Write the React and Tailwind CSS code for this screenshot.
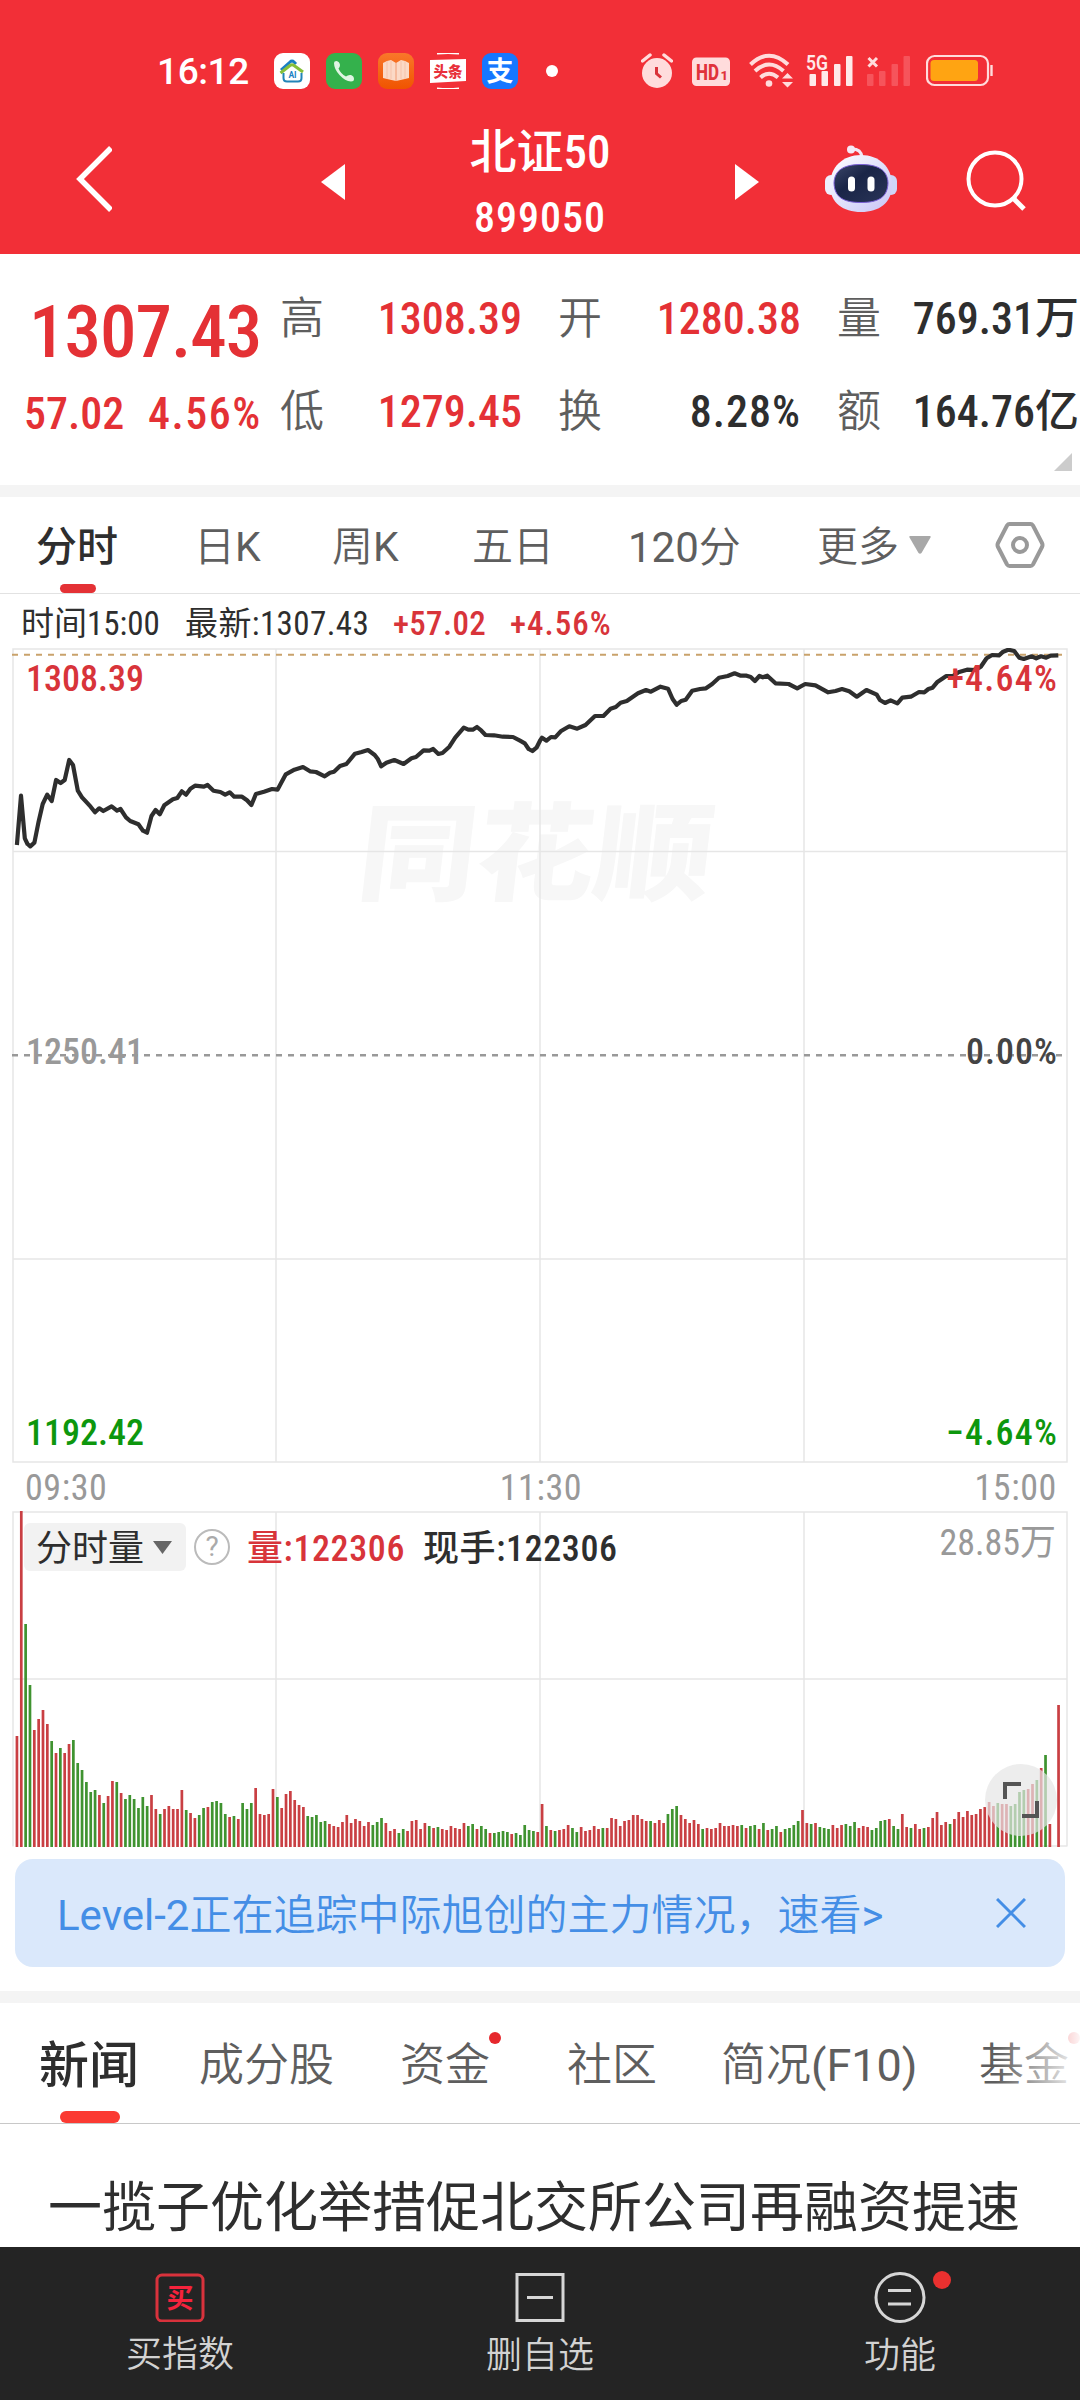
import React from "react";

const price =
  "16.9,197 21,147.7 24.8,190.3 27.5,196 30.3,198.3 34.4,194.7 38.6,173.7 42.7,156 47.2,146.7 51.7,153 56.1,132 60.6,135 64.7,132 69.2,112 73,117 77.8,142.7 82,149.3 86,153.7 90.6,158.7 95,164.3 99.2,160.3 103.3,163 111.6,158.3 117,162.7 120.5,161 126,169.3 130.2,173 138.4,176.3 143,182.7 147,184.7 151.5,168 155.6,162 159.8,166.3 164.3,157.3 172.9,151.3 177.3,150 181.8,143.3 186,146.7 190.4,140.7 195,137.7 203.9,138.7 207.6,137 213.5,142.7 220.4,144 225.2,146.7 229.7,144.3 234.2,148.7 242,148.7 247,152.3 251.4,157 255.9,146 264,143.7 272,141 277.5,141.7 285.8,126.3 294.4,121.7 303,119 310,123.3 316,124 324.7,128.3 330,124.7 334,123.7 340,118 346.4,116 355,105.7 361.6,104 368,102 374.7,107 377.8,111 381.2,118.3 386.4,114.7 394.3,112 403.6,116 411.5,110.3 416,109 423.6,102.3 429.4,102.7 433.2,101 438.4,106 442.5,105 449.4,98.7 455.2,89.7 463.8,79.7 468.3,81.7 472.8,81.7 477,79 481.4,82.7 485.5,87 494,87.3 502.8,88.7 513,89 520,92.7 524.8,95.3 528.6,101 532.4,103 536.5,99.7 540,92.7 542,89.7 546.5,92.7 551,89 555.2,89.3 560.7,83.3 569.3,78.3 577.2,80.7 585.5,77 595,68 603.4,68 610.6,60.7 615.8,59 620.6,54.7 626.8,53 638,45.3 646,42 650.9,43.7 660.5,38.7 668,40.7 672.6,51 676.7,56.7 681.2,53 685.7,51.7 692.2,42.7 700,41 706,40.3 712.2,36 719,29.7 727.7,28 734.6,25.3 740.8,27.7 746.6,27.7 750.7,29 754.9,33 759.4,28 762.8,29.3 767.3,27.7 775.5,35.3 788.6,36 797.2,40.3 805.2,36 815.5,37.3 828.2,44.3 835.5,43 842,41 849.2,43.3 856.8,48.7 866.4,42 876.8,46.7 879.9,52 885,55 890.6,52.3 897.4,55.3 902.3,49.7 910.9,48.7 919,44 924.3,44.3 928.4,41 932.6,39.7 937,34.3 946.3,28 953.2,28 958.4,24.3 967,21.7 975.6,22 980.8,18.7 986.6,10.3 992.1,7 999,7.3 1003.2,3.7 1008.3,1.7 1014.2,3 1019.3,9.7 1023.8,11 1031.7,8.3 1036.2,10.3 1041,8.3 1046.2,9.7 1050.7,7.7 1058.3,7.3";

// one entry per minute, negative = falling minute (green)
const volumes = [
  111, 336, -223, -162, 117, 128, 137, 123, -106, 94, -99, 94, 103, -107, -84, -77, -65, -55, -57, 52,
  -44, 51, 66, -65, 54, -48, -52, -48, -39, -50, -41, 52, 38, -33, 38, 41, 38, 38, 57, -37,
  34, 29, -32, -39, 40, -45, -46, -44, -33, 30, -31, 28, -44, -38, -44, 59, 33, 32, 33, 58,
  -50, 39, 53, 56, 47, 42, 40, -31, -30, -32, -25, -26, 23, 21, 20, 25, 32, 24, 28, 26,
  21, 25, -22, -25, -29, 24, 16, 18, -14, -18, 16, 26, 27, 18, 24, -21, 19, -20, 18, 17,
  21, 19, 18, 24, -21, -23, 18, -21, -18, 14, -14, -15, -16, -15, 13, -14, -12, -22, -17, -16,
  15, 43, -21, 17, -16, 17, 18, 22, -19, -15, 20, 16, 17, 21, 18, -19, 19, 29, 28, 21,
  26, 27, 32, 32, 28, 26, -26, 24, 27, 24, -33, -38, -41, 32, 28, 24, 27, 23, -18, 19,
  18, 19, 24, 21, 21, 22, 21, -22, 19, -21, -22, 18, -24, 17, -18, -21, 15, -18, -19, -22,
  -26, 37, 24, -23, 24, -20, -19, -18, 22, 19, 22, -23, -21, -25, 19, 21, 20, -17, -19, -26,
  -27, 28, -21, -18, 33, 20, -19, 23, 18, -19, 20, 29, 35, 22, 25, -23, 28, 35, 30, 36,
  32, 33, 38, 40, 45, 41, -44, 43, 43, -41, -43, -55, -57, 58, 63, -67, 79, -92, 23, 0, 142,
];

const Din = ({ weight = "font-medium", className = "", children }) => (
  <span className={`whitespace-nowrap [font-stretch:86%] ${weight} ${className}`}>{children}</span>
);

function StatusBar() {
  return (
    <div className="flex h-[36px] items-center pl-[157px] pr-[87px] text-white">
      <span className="w-[117px] text-[37px] leading-none font-medium tracking-[-.4px]">16:12</span>
      <div className="flex gap-4">
        <svg width="36" height="36" viewBox="0 0 36 36">
          <rect width="36" height="36" rx="9" fill="#fff" />
          <path d="M7 17 L16 9 Q18 7 20 9 L22 11" fill="none" stroke="#1a7fc4" strokeWidth="3" />
          <path d="M6.500 20 L16 12.500 Q18 11 20 12.500 L29 19" fill="none" stroke="#86bf3a" strokeWidth="3" />
          <path d="M9.500 20 V25 Q9.500 28.500 13 28.500 H24 Q27.500 28.500 27.500 25 V20" fill="none" stroke="#2184b8" strokeWidth="2" />
          <text x="18.5" y="25" fontSize="8.500" fontWeight="700" textAnchor="middle" fill="#1a7fc4">AI</text>
        </svg>
        <svg width="36" height="36" viewBox="0 0 36 36">
          <rect width="36" height="36" rx="9" fill="#34b14c" />
          <path d="M8 10 Q8 8 10.500 8 Q13.500 8.500 14 12 Q14 14 12.500 15.500 Q14.500 20.500 20 23.500 Q22 21.500 25 22 Q28 23 28 26 Q28 28.500 25 28.500 Q19 28 13.500 22 Q8 16 8 10Z" fill="#dff5e3" />
        </svg>
        <svg width="36" height="36" viewBox="0 0 36 36">
          <defs>
            <linearGradient id="book" x1="0" y1="0" x2="0" y2="1">
              <stop offset="0" stopColor="#f9772a" />
              <stop offset="1" stopColor="#f05400" />
            </linearGradient>
          </defs>
          <rect width="36" height="36" rx="9" fill="url(#book)" />
          <path d="M5 10 L9 8 L13 7 L18 10 L23 7 L27 8 L31 10 V25 L27 26 L18 28 L9 26 L5 25Z" fill="#fbd9c6" />
          <path d="M9 8 V26 M13 8 V26 M23 8 V26 M27 8 V26" stroke="#f6c3ab" strokeWidth="1" />
          <path d="M18 10 V28" stroke="#f09a72" strokeWidth="1" />
        </svg>
        <svg width="36" height="36" viewBox="0 0 36 36">
          <path d="M7 .8 Q18 -.4 29 .8 M7 35.200 Q18 36.400 29 35.200" stroke="#fff" strokeWidth="1.400" fill="none" />
          <path d="M0 7 L36 6 V28 L0 30Z" fill="#fff" />
          <text x="18" y="23.500" fontSize="14.500" fontWeight="900" textAnchor="middle" fill="#e8303a">头条</text>
        </svg>
        <svg width="36" height="36" viewBox="0 0 36 36">
          <rect width="36" height="36" rx="9" fill="#1677ff" />
          <text x="18" y="28" fontSize="27" fontWeight="700" textAnchor="middle" fill="#fff">支</text>
        </svg>
      </div>
      <span className="ml-[28px] h-3 w-3 rounded-full bg-white" />
      <div className="ml-auto flex items-center">
        <svg width="32" height="36" viewBox="0 0 32 36" className="mr-[19px]">
          <circle cx="16" cy="20" r="15" fill="#ffdcdc" />
          <path d="M1.500 8 L9 2 M30.500 8 L23 2" stroke="#ffdcdc" strokeWidth="3.500" strokeLinecap="round" />
          <path d="M15.500 14 V20.500 L20 24.500" fill="none" stroke="#d9333a" strokeWidth="3" />
        </svg>
        <svg width="38" height="36" viewBox="0 0 38 36" className="mr-[19px]">
          <rect y="4.500" width="38" height="28.500" rx="4.500" fill="#ffdcdc" />
          <text x="4" y="27" fontSize="22" fontWeight="800" textLength="23" lengthAdjust="spacingAndGlyphs" fill="#e0323a">HD</text>
          <text x="28.500" y="27" fontSize="13" fontWeight="800" fill="#e0323a">1</text>
        </svg>
        <svg width="44" height="36" viewBox="0 0 44 36" className="mr-[13px]">
          <g fill="none" stroke="#ffdcdc" strokeWidth="4">
            <path d="M1.500 11.500 Q20 -6 39 11.500" />
            <path d="M6 18 Q20 5 34.500 18" />
            <path d="M11.500 24.500 Q20 17 29 24.500" />
          </g>
          <circle cx="20" cy="30.500" r="3.300" fill="#ffdcdc" />
          <path d="M33 25.500 L38.500 20 L44 25.500Z M33 29 L38.500 34.500 L44 29Z" fill="#ffdcdc" />
        </svg>
        <svg width="47" height="36" viewBox="0 0 47 36" className="mr-[14px] overflow-visible" fill="#ffe9e9">
          <text x="0" y="16.500" fontSize="20" fontWeight="600" textLength="22" lengthAdjust="spacingAndGlyphs">5G</text>
          <rect x="3.500" y="21" width="6.500" height="12" rx="1" />
          <rect x="15.500" y="18" width="6.500" height="15" rx="1" />
          <rect x="28" y="11" width="6.500" height="22" rx="1" />
          <rect x="40" y="3" width="6.500" height="30" rx="1" />
        </svg>
        <svg width="44" height="36" viewBox="0 0 44 36" className="mr-[15px]" fill="#f6545b">
          <path d="M1.500 5 L10 13.500 M10 5 L1.500 13.500" stroke="#ffdcdc" strokeWidth="3" />
          <rect x="0" y="21" width="6.500" height="12" rx="1" />
          <rect x="12" y="18" width="6.500" height="15" rx="1" />
          <rect x="24.500" y="11" width="6.500" height="22" rx="1" />
          <rect x="36.500" y="3" width="6.500" height="30" rx="1" />
        </svg>
        <svg width="67" height="36" viewBox="0 0 67 36">
          <rect x="1" y="3" width="61" height="29" rx="7.500" fill="none" stroke="#ffdcdc" strokeWidth="2.200" />
          <rect x="4.500" y="7" width="47.500" height="21" rx="3.500" fill="#ffa412" />
          <path d="M65.500 12 V23" stroke="#ffdcdc" strokeWidth="2.400" />
        </svg>
      </div>
    </div>
  );
}

function TitleBar() {
  return (
    <div className="flex h-[124px] items-center text-white">
      <svg width="36" height="66" viewBox="0 0 36 66" className="ml-[76px]">
        <path d="M35 2 L4 33 L35 64" fill="none" stroke="#fff" strokeWidth="5.500" />
      </svg>
      <svg width="24" height="36" viewBox="0 0 24 36" className="mt-[5px] ml-[209px]">
        <path d="M24 0 V36 L0 18Z" fill="#fff" />
      </svg>
      <div className="flex w-[390px] flex-col items-center pt-[12px]">
        <Din className="text-[47px] leading-[66px]">北证50</Din>
        <Din className="text-[42px] leading-[66px] tracking-[1px]">899050</Din>
      </div>
      <svg width="24" height="36" viewBox="0 0 24 36" className="mt-[5px]">
        <path d="M0 0 V36 L24 18Z" fill="#fff" />
      </svg>
      <svg width="72" height="68" viewBox="0 0 72 68" className="ml-[66px]">
        <defs>
          <linearGradient id="shell" x1="0" y1="0" x2="1" y2="1">
            <stop offset="0" stopColor="#ffffff" />
            <stop offset=".6" stopColor="#dcdcfa" />
            <stop offset="1" stopColor="#c9c4f5" />
          </linearGradient>
          <linearGradient id="visor" x1="0" y1="0" x2="1" y2="1">
            <stop offset="0" stopColor="#3b4668" />
            <stop offset=".4" stopColor="#1a2547" />
            <stop offset="1" stopColor="#2a3558" />
          </linearGradient>
        </defs>
        <path d="M25 4 Q36 3 37 12" fill="none" stroke="#f3e6f5" strokeWidth="3" />
        <circle cx="26" cy="4.500" r="4" fill="#f6e9f6" />
        <rect x="0" y="30" width="12" height="20" rx="6" fill="#eeeefc" />
        <rect x="60" y="30" width="12" height="20" rx="6" fill="#cfd6f8" />
        <path d="M36 10 C54 10 67 22 67 40 C67 58 54 67 36 67 C18 67 5 58 5 40 C5 22 18 10 36 10Z" fill="url(#shell)" />
        <path d="M36 19.500 C53 19.500 62.500 25 63 38 C62.500 52 54 57.500 36 57.500 C18 57.500 9.500 52 9 38 C9.500 25 19 19.500 36 19.500Z" fill="url(#visor)" stroke="#7a5fd6" strokeWidth="1" />
        <rect x="23" y="31.500" width="7" height="15" rx="3.500" fill="#fff" />
        <rect x="42.500" y="31.500" width="7" height="15" rx="3.500" fill="#fff" />
      </svg>
      <svg width="62" height="62" viewBox="0 0 62 62" className="mt-[2px] ml-[68px]">
        <circle cx="30" cy="30" r="26.500" fill="none" stroke="#fff" strokeWidth="4" />
        <path d="M48 49 L59 60" stroke="#fff" strokeWidth="5" />
      </svg>
    </div>
  );
}

const quotes = [
  ["高", "1308.39", "text-[#e43135]", "开", "1280.38", "text-[#e43135]", "量", "769.31万"],
  ["低", "1279.45", "text-[#e43135]", "换", "8.28%", "text-[#2e2e2e] tracking-[1px]", "额", "164.76亿"],
];

function Quote() {
  return (
    <section className="relative flex h-[231px] text-[#e43135]">
      <div className="w-[280px] pt-[36px]">
        <Din className="block pl-[29px] text-[73px] leading-[84px] tracking-[-1px]">1307.43</Din>
        <div className="flex pt-[15px] pl-[24px] text-[44px] leading-[50px]">
          <Din className="w-[124px]">57.02</Din>
          <Din className="tracking-[1.5px]">4.56%</Din>
        </div>
      </div>
      <div className="flex flex-1 flex-col gap-[29px] pt-[33px] text-[44px] leading-[64px]">
        {quotes.map(([a, av, ac, b, bv, bc, c, cv]) => (
          <div key={a} className="flex font-[350] text-[#5e5e5e]">
            <span className="w-[44px]">{a}</span>
            <Din className={`w-[198px] text-right ${ac}`}>{av}</Din>
            <span className="ml-[36px] w-[44px]">{b}</span>
            <Din className={`w-[199px] text-right ${bc}`}>{bv}</Din>
            <span className="ml-[36px] w-[44px]">{c}</span>
            <Din className="flex-1 pr-px text-right text-[#2e2e2e]">{cv}</Din>
          </div>
        ))}
      </div>
      <svg width="18" height="18" viewBox="0 0 18 18" className="absolute right-2 bottom-[14px]">
        <path d="M18 0 V18 H0Z" fill="#ccc" />
      </svg>
    </section>
  );
}

function PeriodTabs() {
  return (
    <nav className="relative flex h-[97px] items-center border-b border-[#e2e2e2] pt-[5px] text-[41px] font-[350] text-[#5e5e5e]">
      <span className="ml-[36px] w-[158px] font-medium text-[#2e2e2e]">分时</span>
      <span className="absolute bottom-0 left-[60px] h-[9px] w-[36px] rounded-full bg-[#e43135]" />
      <span className="w-[138px]">日<span className="font-normal">K</span></span>
      <span className="w-[140px]">周<span className="font-normal">K</span></span>
      <span className="w-[156px]">五日</span>
      <span className="w-[189px] text-[42px]"><span className="font-normal">120</span>分</span>
      <span>更多</span>
      <svg width="22" height="18" viewBox="0 0 22 18" className="mb-[5px] ml-[10px]">
        <path d="M1 0 H21 Q22 0 21.500 1.500 L12.500 17 Q11 18.500 9.500 17 L.5 1.500 Q0 0 1 0Z" fill="#a8a8a8" />
      </svg>
      <svg width="50" height="48" viewBox="0 0 50 48" className="mb-[5px] ml-[64px]">
        <path d="M14.500 3 H35.500 Q37 3 38 4.500 L47 22 Q48 24 47 26 L38 43.500 Q37 45 35.500 45 H14.500 Q13 45 12 43.500 L3 26 Q2 24 3 22 L12 4.500 Q13 3 14.500 3Z" fill="none" stroke="#999" strokeWidth="4" />
        <circle cx="25" cy="24" r="7" fill="none" stroke="#999" strokeWidth="4" />
      </svg>
    </nav>
  );
}

function PriceChart() {
  return (
    <section>
      <div className="flex h-[54px] items-center pt-[6px] pl-[21px] text-[33px] text-[#2e2e2e]">
        <Din weight="font-normal" className="w-[164px]">时间15:00</Din>
        <Din weight="font-normal" className="w-[208px] tracking-[.4px]">最新:1307.43</Din>
        <Din className="w-[117px] text-[#d8343a] tracking-[.3px]">+57.02</Din>
        <Din className="text-[#d8343a] tracking-[1px]">+4.56%</Din>
      </div>
      <div className="relative h-[816px] text-[36px] leading-[40px]">
        <span className="absolute top-[148px] left-[359px] -skew-x-6 scale-y-90 text-[118px] leading-[120px] font-black whitespace-nowrap text-[#f7f7f7]">同花顺</span>
        <svg width="1080" height="816" viewBox="0 0 1080 816" className="absolute inset-0">
          <g fill="none" stroke="#e6e6e6" strokeWidth="1.500">
            <rect x="13" y="1" width="1054" height="813" />
            <path d="M276 1 V814 M540 1 V814 M804 1 V814 M13 203.500 H1067 M13 611 H1067" />
          </g>
          <path d="M12 6.700 H1063" stroke="#c9a26b" strokeWidth="2" strokeDasharray="6 6" />
          <path d="M12 407.300 H1063" stroke="#999" strokeWidth="2.500" strokeDasharray="6 6" />
          <polyline points={price} fill="none" stroke="#2e2e2e" strokeWidth="4.200" strokeLinejoin="round" />
        </svg>
        <Din className="absolute top-[11px] left-[26px] text-[#d8343a]">1308.39</Din>
        <Din className="absolute top-[11px] right-[22px] text-[#d8343a] tracking-[1.2px]">+4.64%</Din>
        <Din className="absolute top-[384px] left-[26px] text-[#999]">1250.41</Din>
        <Din className="absolute top-[384px] right-[22px] text-[#444] tracking-[1px]">0.00%</Din>
        <Din className="absolute top-[765px] left-[26px] text-[#0d970d]">1192.42</Din>
        <Din className="absolute top-[765px] right-[22px] text-[#0d970d] tracking-[1.2px]">−4.64%</Din>
      </div>
      <div className="flex h-[47px] items-center justify-between pr-[23px] pl-[25px] text-[36px] tracking-[.6px] text-[#999]">
        <Din weight="font-[450]">09:30</Din>
        <Din weight="font-[450]">11:30</Din>
        <Din weight="font-[450]">15:00</Din>
      </div>
    </section>
  );
}

function VolumeChart() {
  return (
    <section className="relative h-[336px] pt-[12px]">
      <svg width="1080" height="336" viewBox="0 0 1080 336" className="absolute inset-0">
        <g fill="none" stroke="#e6e6e6" strokeWidth="1.500">
          <path d="M13 335.500 V1 H1067 V335.500 M276 1 V335 M540 1 V335 M804 1 V335 M13 168 H1067 M1040 335 H1067" />
        </g>
        {volumes.map((v, i) => (
          <rect key={i} x={15.6 + i * 4.34} y={336 - Math.abs(v)} width="2.700" height={Math.abs(v)} fill={v > 0 ? "#c93f43" : "#3f9330"} />
        ))}
      </svg>
      <div className="relative flex h-[48px] items-center pl-[24px] text-[36px] text-[#2e2e2e]">
        <div className="flex h-[48px] w-[162px] items-center rounded-md bg-[#f2f2f2] pl-[12px]">
          <span className="pt-[4px]">分时量</span>
          <svg width="19" height="13" viewBox="0 0 19 13" className="ml-[9px]">
            <path d="M0 0 H19 L9.500 13Z" fill="#666" />
          </svg>
        </div>
        <span className="ml-2 flex h-[36px] w-[36px] items-center justify-center rounded-full border-[2.5px] border-[#bbb] text-[28px] leading-none text-[#aaa]">?</span>
        <Din className="ml-[17px] w-[176px] pt-[4px] tracking-[.6px] text-[#d8343a]">量:122306</Din>
        <Din className="pt-[4px] tracking-[.6px]">现手:122306</Din>
        <Din weight="font-normal" className="mr-[24px] mb-[9px] ml-auto text-[#999]">28.85万</Din>
      </div>
      <div className="absolute top-[253px] left-[985px] flex h-[72px] w-[72px] items-center justify-center rounded-full bg-[#e6e6e6]/70">
        <svg width="38" height="38" viewBox="0 0 38 38" fill="none" stroke="#555" strokeWidth="4">
          <path d="M3 18 V3 H19 M35 20 V35 H20" />
        </svg>
      </div>
    </section>
  );
}

function NewsTabs() {
  return (
    <nav className="relative flex h-[121px] items-center border-b border-[#c8c8c8] pt-[6px] text-[45px] font-[350] whitespace-nowrap text-[#5e5e5e]">
      <span className="ml-[39px] w-[160px] text-[50px] font-medium text-[#2e2e2e]">新闻</span>
      <span className="absolute bottom-0 left-[60px] h-[12px] w-[60px] rounded-full bg-[#fb3a32]" />
      <span className="w-[201px]">成分股</span>
      <span className="relative w-[167px]">
        资金
        <span className="absolute top-0 left-[89px] h-3 w-3 rounded-full bg-[#e6282d]" />
      </span>
      <span className="w-[154px]">社区</span>
      <span className="w-[258px]">简况<span className="font-normal">(F10)</span></span>
      <span>基金</span>
      <span className="absolute top-[29px] right-0 h-3 w-3 rounded-full bg-[#e6282d]" />
      <span className="absolute top-0 right-0 h-[118px] w-[84px] bg-linear-to-r from-white/0 to-white/95" />
    </nav>
  );
}

function BottomBar() {
  return (
    <footer className="flex h-[153px] bg-[#242424] text-[36px] leading-[48px] font-[350] text-[#d2d2d2]">
      <div className="flex flex-1 flex-col items-center pt-[25px]">
        <svg width="50" height="50" viewBox="0 0 50 50">
          <rect x="2" y="3" width="46" height="46" rx="5" fill="none" stroke="#d9323c" strokeWidth="3" />
          <text x="25" y="36" fontSize="27" fontWeight="700" textAnchor="middle" fill="#f5233c">买</text>
        </svg>
        <span className="mt-[9px]">买指数</span>
      </div>
      <div className="flex flex-1 flex-col items-center pt-[25px]">
        <svg width="50" height="50" viewBox="0 0 50 50" fill="none" stroke="#d6d6d6" strokeWidth="3">
          <rect x="2" y="2.500" width="46" height="46" />
          <path d="M12 25.500 H38" />
        </svg>
        <span className="mt-[10px]">删自选</span>
      </div>
      <div className="relative flex flex-1 flex-col items-center pt-[25px]">
        <svg width="52" height="52" viewBox="0 0 52 52" fill="none" stroke="#d6d6d6" strokeWidth="3">
          <circle cx="26" cy="25.500" r="24" />
          <path d="M14 18.500 H37 M14 32 H37" />
        </svg>
        <span className="mt-[8px]">功能</span>
        <span className="absolute top-[24px] left-[213px] h-[18px] w-[18px] rounded-full bg-[#ea302f]" />
      </div>
    </footer>
  );
}

export default function App() {
  return (
    <div className="h-[2400px] w-[1080px] overflow-hidden bg-white font-[Roboto,'Noto_Sans_CJK_SC',sans-serif]">
      <header className="h-[254px] bg-[#f22f37] pt-[53px]">
        <StatusBar />
        <div className="pt-[28px]">
          <TitleBar />
        </div>
      </header>
      <Quote />
      <div className="h-3 bg-[#f4f4f4]" />
      <PeriodTabs />
      <PriceChart />
      <VolumeChart />
      <div className="mx-[15px] mt-3 flex h-[108px] items-center rounded-[18px] bg-[#dae8fb] pl-[42px] text-[42px] font-[350] text-[#448ee6]">
        <span className="pt-[4px]"><span className="font-normal">Level-2</span>正在追踪中际旭创的主力情况，速看<span className="font-normal">&gt;</span></span>
        <svg width="30" height="30" viewBox="0 0 30 30" className="mr-[39px] ml-auto">
          <path d="M1 1 L29 29 M29 1 L1 29" stroke="#448ee6" strokeWidth="3" />
        </svg>
      </div>
      <div className="mt-6 h-3 bg-[#f4f4f4]" />
      <NewsTabs />
      <div className="h-[123px] pt-[47px] pl-[48px] text-[54px] leading-[76px] whitespace-nowrap text-[#2e2e2e]">一揽子优化举措促北交所公司再融资提速</div>
      <BottomBar />
    </div>
  );
}
